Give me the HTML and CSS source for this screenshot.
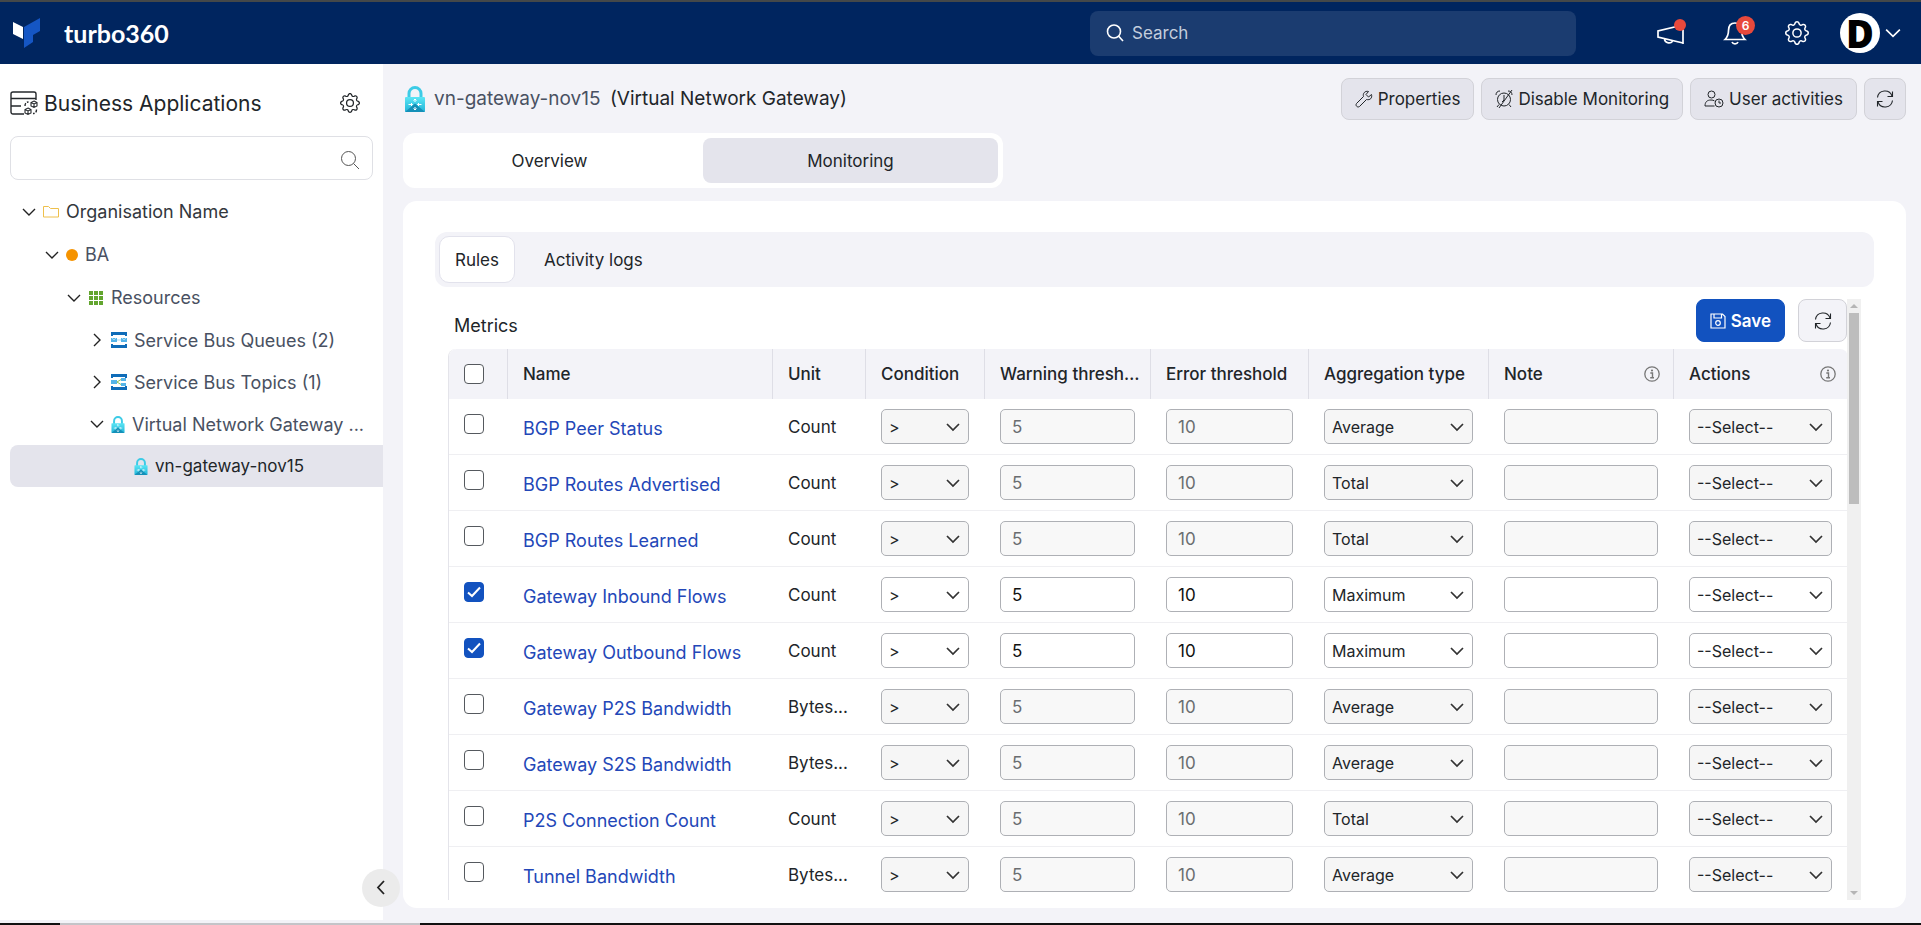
FILE: index.html
```html
<!DOCTYPE html>
<html lang="en">
<head>
<meta charset="utf-8">
<meta name="viewport" content="width=device-width, initial-scale=1">
<title>turbo360 - Monitoring</title>
<link rel="stylesheet" href="styles.css">
</head>
<body>
<svg class="defs" aria-hidden="true">
  <defs>
    <linearGradient id="cyan" x1="0" y1="0" x2="0" y2="1"><stop offset="0" stop-color="#5be6f5"/><stop offset="1" stop-color="#22b4d8"/></linearGradient>
    <symbol id="i-gear" viewBox="0 0 16 16"><path fill="currentColor" d="M8 4.754a3.246 3.246 0 1 0 0 6.492 3.246 3.246 0 0 0 0-6.492zM5.754 8a2.246 2.246 0 1 1 4.492 0 2.246 2.246 0 0 1-4.492 0z"/><path fill="currentColor" d="M9.796 1.343c-.527-1.79-3.065-1.79-3.592 0l-.094.319a.873.873 0 0 1-1.255.52l-.292-.16c-1.64-.892-3.433.902-2.54 2.541l.159.292a.873.873 0 0 1-.52 1.255l-.319.094c-1.79.527-1.79 3.065 0 3.592l.319.094a.873.873 0 0 1 .52 1.255l-.16.292c-.892 1.64.901 3.434 2.541 2.54l.292-.159a.873.873 0 0 1 1.255.52l.094.319c.527 1.79 3.065 1.79 3.592 0l.094-.319a.873.873 0 0 1 1.255-.52l.292.16c1.64.893 3.434-.902 2.54-2.541l-.159-.292a.873.873 0 0 1 .52-1.255l.319-.094c1.79-.527 1.79-3.065 0-3.592l-.319-.094a.873.873 0 0 1-.52-1.255l.16-.292c.893-1.64-.902-3.433-2.541-2.54l-.292.159a.873.873 0 0 1-1.255-.52l-.094-.319zm-2.633.283c.246-.835 1.428-.835 1.674 0l.094.319a1.873 1.873 0 0 0 2.693 1.115l.291-.16c.764-.415 1.6.42 1.184 1.185l-.159.292a1.873 1.873 0 0 0 1.116 2.692l.318.094c.835.246.835 1.428 0 1.674l-.319.094a1.873 1.873 0 0 0-1.115 2.693l.16.291c.415.764-.42 1.6-1.185 1.184l-.291-.159a1.873 1.873 0 0 0-2.693 1.116l-.094.318c-.246.835-1.428.835-1.674 0l-.094-.319a1.873 1.873 0 0 0-2.692-1.115l-.292.16c-.764.415-1.6-.42-1.184-1.185l.159-.291A1.873 1.873 0 0 0 1.945 8.93l-.319-.094c-.835-.246-.835-1.428 0-1.674l.319-.094A1.873 1.873 0 0 0 3.06 4.377l-.16-.292c-.415-.764.42-1.6 1.185-1.184l.292.159a1.873 1.873 0 0 0 2.692-1.115l.094-.319z"/></symbol>
    <symbol id="i-search" viewBox="0 0 20 20"><g fill="none" stroke="currentColor"><circle cx="8.5" cy="8.5" r="7"/><path d="M13.5 13.5 19 19"/></g></symbol>
    <symbol id="i-down" viewBox="0 0 14 14"><path d="M1 4l6 6 6-6" fill="none" stroke="currentColor" stroke-width="1.400"/></symbol>
    <symbol id="i-right" viewBox="0 0 14 14"><path d="M4 1l6 6-6 6" fill="none" stroke="currentColor" stroke-width="1.400"/></symbol>
    <symbol id="i-refresh" viewBox="0 0 18 18"><g fill="none" stroke="currentColor" stroke-width="1.100"><path d="M1.500 7.500A7.500 7.500 0 0 1 16 6M16.500 10.500A7.500 7.500 0 0 1 2 12"/><path d="M16.500 1.500V6.500h-5M1.500 16.500v-5h5"/></g></symbol>
    <symbol id="i-lock" viewBox="0 0 20 26"><path d="M4 13V7.500a6 6 0 0 1 12 0V13" fill="none" stroke="#3ccbe6" stroke-width="3"/><rect y="11" width="20" height="15" rx="1" fill="url(#cyan)"/><path d="M0 26 10 17.500 20 26z" fill="#1490b8"/><path d="M10 13v3M10 21v3M3.500 18.500h4M12.500 18.500h4M8.500 14.500 10 13l1.500 1.500M8.500 22.500 10 24l1.500-1.500M6 17l1.500 1.500L6 20M14 17l-1.500 1.500L14 20" fill="none" stroke="#fff"/></symbol>
    <symbol id="i-info" viewBox="0 0 16 16"><circle cx="8" cy="8" r="7.200" fill="none" stroke="currentColor" stroke-width="1.300"/><circle cx="8" cy="4.500" r="1.100" fill="currentColor"/><path d="M6.300 7h2.200v4.500M6.200 11.700h3.800" fill="none" stroke="currentColor" stroke-width="1.400"/></symbol>
  </defs>
</svg>

<div class="app">
  <header class="topbar">
    <a class="brand" href="#">
      <svg class="brand-mark" viewBox="0 0 28 30"><path d="M0 4l10 5v12L0 16z" fill="#fff"/><path d="M11 9 27 0v13l-7 4v7l-9 6z" fill="#1556c4"/></svg>
      <span>turbo360</span>
    </a>
    <label class="global-search">
      <svg class="s18" viewBox="0 0 18 18" fill="none" stroke="#fff" stroke-width="1.600"><circle cx="8" cy="7.500" r="6.500"/><path d="M12.500 12 17 17"/></svg>
      <input type="search" placeholder="Search" aria-label="Search">
    </label>
    <div class="top-actions">
      <button class="top-btn" aria-label="Announcements">
        <svg class="s28" viewBox="0 0 28 28" fill="none" stroke="#fff" stroke-width="1.700"><path d="M1 12v6l25 6V6zM26 4v21M7.500 19.500c0 5 7.500 6 8 2"/></svg>
        <span class="dot"></span>
      </button>
      <button class="top-btn" aria-label="Notifications">
        <svg class="s24" viewBox="0 0 24 24" fill="none" stroke="#fff" stroke-width="1.700"><path d="M12 2C7 2 5.500 6 5.500 9.500c0 5-1.500 7-3.500 9h20c-2-2-3.500-4-3.500-9C18.500 6 17 2 12 2zM9 21c1 2.500 5 2.500 6 0"/></svg>
        <span class="badge">6</span>
      </button>
      <button class="top-btn" aria-label="Settings"><svg class="s24"><use href="#i-gear"/></svg></button>
      <button class="account" aria-label="Account"><span class="avatar">D</span><svg class="s16"><use href="#i-down"/></svg></button>
    </div>
  </header>

  <div class="body">
    <aside class="sidebar">
      <div class="side-head">
        <svg class="s28" viewBox="0 0 28 28" fill="none" stroke="#25282c" stroke-width="1.400"><path d="M14 25H3a2 2 0 0 1-2-2V5a2 2 0 0 1 2-2h21a2 2 0 0 1 2 2v6M1 9.500h25M1 17h10"/><path d="M24 12l3 1.500v3.500l-3 1.500-3-1.500v-3.500zM21 13.500l3 1.500 3-1.500M24 15v3.500M18 19l3 1.500V24l-3 1.500L15 24v-3.500zM15 20.500l3 1.500 3-1.500M18 22v3.500" stroke-width="1.100"/><path d="M15 17c0-2.500 1-4 3.500-4M26.500 20.500c0 2.500-1 4-3.500 4" stroke-dasharray="3 1.500"/></svg>
        <h2>Business Applications</h2>
        <button class="plain" aria-label="Application settings"><svg class="s20"><use href="#i-gear"/></svg></button>
      </div>
      <label class="side-search">
        <input type="text" aria-label="Filter applications">
        <svg class="s20"><use href="#i-search"/></svg>
      </label>
      <ul class="tree">
        <li class="node l0"><svg class="chev"><use href="#i-down"/></svg><svg class="s16" viewBox="0 0 16 16"><path d="M.5 13V2.500h5l2 2h8V13z" fill="none" stroke="#eec04c"/></svg><span class="dark">Organisation Name</span></li>
        <li class="node l1"><svg class="chev"><use href="#i-down"/></svg><span class="status"></span><span>BA</span></li>
        <li class="node l2"><svg class="chev"><use href="#i-down"/></svg><svg class="s16" viewBox="0 0 16 16"><path d="M1 1h4v4H1zM6 1h4v4H6zM11 1h4v4h-4zM1 6h4v4H1zM6 6h4v4H6zM11 6h4v4h-4zM1 11h4v4H1zM6 11h4v4H6zM11 11h4v4h-4z" fill="#62a52e"/></svg><span>Resources</span></li>
        <li class="node l3"><svg class="chev"><use href="#i-right"/></svg><svg class="s16" viewBox="0 0 16 16"><path d="M0 0h16v4h-2V3H2v1H0zM0 16h16v-4h-2v1H2v-1H0z" fill="#0f6cb8"/><path d="M0 6h6v4H0zM10 6h6v4h-6z" fill="#55b4e8"/><path d="M6 8h4M1 6l2 2 2-2M11 6l2 2 2-2" fill="none" stroke="#a5dbf5"/></svg><span>Service Bus Queues (2)</span></li>
        <li class="node l3"><svg class="chev"><use href="#i-right"/></svg><svg class="s16" viewBox="0 0 16 16"><path d="M0 0h16v4h-2V3H2v1H0zM0 16h16v-4h-2v1H2v-1H0z" fill="#0f6cb8"/><path d="M0 6h6v4H0zM10 4h5v3h-5zM10 9h5v3h-5z" fill="#55b4e8"/><path d="M6 8l4-2.500M6 8l4 2.500" stroke="#8cc152" fill="none"/></svg><span>Service Bus Topics (1)</span></li>
        <li class="node l3"><svg class="chev"><use href="#i-down"/></svg><svg class="lock-s"><use href="#i-lock"/></svg><span>Virtual Network Gateway ...</span></li>
        <li class="node l4 selected"><svg class="lock-s"><use href="#i-lock"/></svg><span>vn-gateway-nov15</span></li>
      </ul>
      <button class="collapse" aria-label="Collapse sidebar"><svg class="s16" viewBox="0 0 16 16"><path d="M11 1 5 7.500 11 14" fill="none" stroke="#222" stroke-width="1.800"/></svg></button>
    </aside>

    <main class="main">
      <div class="page-head">
        <svg class="lock-l"><use href="#i-lock"/></svg>
        <h1><span>vn-gateway-nov15</span> (Virtual Network Gateway)</h1>
        <div class="page-actions">
          <button class="btn"><svg class="s18" viewBox="0 0 18 18" fill="none" stroke="currentColor"><path d="M16.500 4.500 13.500 7 11 4.500 13.500 1.500C10 .5 7.500 3.500 8.500 6.500L1.500 13.500c-1.500 2 1 4.500 3 3L11.500 9.500c3.500 1 6-1.500 5-5z"/></svg>Properties</button>
          <button class="btn"><svg class="s18" viewBox="0 0 18 18" fill="none" stroke="currentColor"><circle cx="9" cy="9.500" r="6.500"/><path d="M1 5C1 2.500 2.500 1 5 1M13 1c2.500 0 4 1.500 4 4M9 5v5l-2 2M17 0 4 18M4 14.500 2 17M14 14.500l2 2.500"/></svg>Disable Monitoring</button>
          <button class="btn"><svg class="s20" viewBox="0 0 20 20" fill="none" stroke="currentColor"><circle cx="7.500" cy="5.500" r="3.500"/><path d="M10.500 17H1c0-4 2-6 6-6 1.500 0 2.500.2 3.500 1"/><circle cx="15" cy="14" r="4"/><path d="M15 11.500V14h2"/></svg>User activities</button>
          <button class="btn icon" aria-label="Refresh"><svg class="s18"><use href="#i-refresh"/></svg></button>
        </div>
      </div>

      <nav class="tabs">
        <button>Overview</button>
        <button class="active">Monitoring</button>
      </nav>

      <section class="card">
        <nav class="subtabs">
          <button class="active">Rules</button>
          <button>Activity logs</button>
        </nav>
        <div class="scroller">
          <div class="content">
            <div class="metrics-head">
              <h3>Metrics</h3>
              <button class="btn save"><svg class="s16" viewBox="0 0 16 16" fill="none" stroke="currentColor" stroke-width="1.200"><path d="M1 1h11.500L15 3.500V15H1zM4 1v4h7.500V1"/><circle cx="8" cy="10" r="2.300"/></svg>Save</button>
              <button class="btn light" aria-label="Refresh metrics"><svg class="s18"><use href="#i-refresh"/></svg></button>
            </div>
            <table class="metrics">
              <colgroup><col class="c-check"><col class="c-name"><col class="c-unit"><col class="c-cond"><col class="c-warn"><col class="c-err"><col class="c-agg"><col class="c-note"><col class="c-act"></colgroup>
              <thead><tr>
                <th><input type="checkbox" aria-label="Select all"></th><th>Name</th><th>Unit</th><th>Condition</th><th>Warning threshold</th><th>Error threshold</th><th>Aggregation type</th>
                <th><div class="th-info">Note<svg class="s16"><use href="#i-info"/></svg></div></th>
                <th><div class="th-info">Actions<svg class="s16"><use href="#i-info"/></svg></div></th>
              </tr></thead>
              <tbody>
                <tr><td><input type="checkbox" aria-label="BGP Peer Status"></td><td><a href="#">BGP Peer Status</a></td><td>Count</td><td><select disabled aria-label="Condition"><option>&gt;</option></select></td><td><input type="text" value="5" disabled aria-label="Warning threshold"></td><td><input type="text" value="10" disabled aria-label="Error threshold"></td><td><select disabled aria-label="Aggregation type"><option>Average</option></select></td><td><input type="text" disabled aria-label="Note"></td><td><select disabled aria-label="Actions"><option>--Select--</option></select></td></tr>
                <tr><td><input type="checkbox" aria-label="BGP Routes Advertised"></td><td><a href="#">BGP Routes Advertised</a></td><td>Count</td><td><select disabled aria-label="Condition"><option>&gt;</option></select></td><td><input type="text" value="5" disabled aria-label="Warning threshold"></td><td><input type="text" value="10" disabled aria-label="Error threshold"></td><td><select disabled aria-label="Aggregation type"><option>Total</option></select></td><td><input type="text" disabled aria-label="Note"></td><td><select disabled aria-label="Actions"><option>--Select--</option></select></td></tr>
                <tr><td><input type="checkbox" aria-label="BGP Routes Learned"></td><td><a href="#">BGP Routes Learned</a></td><td>Count</td><td><select disabled aria-label="Condition"><option>&gt;</option></select></td><td><input type="text" value="5" disabled aria-label="Warning threshold"></td><td><input type="text" value="10" disabled aria-label="Error threshold"></td><td><select disabled aria-label="Aggregation type"><option>Total</option></select></td><td><input type="text" disabled aria-label="Note"></td><td><select disabled aria-label="Actions"><option>--Select--</option></select></td></tr>
                <tr><td><input type="checkbox" checked aria-label="Gateway Inbound Flows"></td><td><a href="#">Gateway Inbound Flows</a></td><td>Count</td><td><select aria-label="Condition"><option>&gt;</option></select></td><td><input type="text" value="5" aria-label="Warning threshold"></td><td><input type="text" value="10" aria-label="Error threshold"></td><td><select aria-label="Aggregation type"><option>Maximum</option></select></td><td><input type="text" aria-label="Note"></td><td><select aria-label="Actions"><option>--Select--</option></select></td></tr>
                <tr><td><input type="checkbox" checked aria-label="Gateway Outbound Flows"></td><td><a href="#">Gateway Outbound Flows</a></td><td>Count</td><td><select aria-label="Condition"><option>&gt;</option></select></td><td><input type="text" value="5" aria-label="Warning threshold"></td><td><input type="text" value="10" aria-label="Error threshold"></td><td><select aria-label="Aggregation type"><option>Maximum</option></select></td><td><input type="text" aria-label="Note"></td><td><select aria-label="Actions"><option>--Select--</option></select></td></tr>
                <tr><td><input type="checkbox" aria-label="Gateway P2S Bandwidth"></td><td><a href="#">Gateway P2S Bandwidth</a></td><td>Bytes...</td><td><select disabled aria-label="Condition"><option>&gt;</option></select></td><td><input type="text" value="5" disabled aria-label="Warning threshold"></td><td><input type="text" value="10" disabled aria-label="Error threshold"></td><td><select disabled aria-label="Aggregation type"><option>Average</option></select></td><td><input type="text" disabled aria-label="Note"></td><td><select disabled aria-label="Actions"><option>--Select--</option></select></td></tr>
                <tr><td><input type="checkbox" aria-label="Gateway S2S Bandwidth"></td><td><a href="#">Gateway S2S Bandwidth</a></td><td>Bytes...</td><td><select disabled aria-label="Condition"><option>&gt;</option></select></td><td><input type="text" value="5" disabled aria-label="Warning threshold"></td><td><input type="text" value="10" disabled aria-label="Error threshold"></td><td><select disabled aria-label="Aggregation type"><option>Average</option></select></td><td><input type="text" disabled aria-label="Note"></td><td><select disabled aria-label="Actions"><option>--Select--</option></select></td></tr>
                <tr><td><input type="checkbox" aria-label="P2S Connection Count"></td><td><a href="#">P2S Connection Count</a></td><td>Count</td><td><select disabled aria-label="Condition"><option>&gt;</option></select></td><td><input type="text" value="5" disabled aria-label="Warning threshold"></td><td><input type="text" value="10" disabled aria-label="Error threshold"></td><td><select disabled aria-label="Aggregation type"><option>Total</option></select></td><td><input type="text" disabled aria-label="Note"></td><td><select disabled aria-label="Actions"><option>--Select--</option></select></td></tr>
                <tr><td><input type="checkbox" aria-label="Tunnel Bandwidth"></td><td><a href="#">Tunnel Bandwidth</a></td><td>Bytes...</td><td><select disabled aria-label="Condition"><option>&gt;</option></select></td><td><input type="text" value="5" disabled aria-label="Warning threshold"></td><td><input type="text" value="10" disabled aria-label="Error threshold"></td><td><select disabled aria-label="Aggregation type"><option>Average</option></select></td><td><input type="text" disabled aria-label="Note"></td><td><select disabled aria-label="Actions"><option>--Select--</option></select></td></tr>
              </tbody>
            </table>
          </div>
          <div class="scrollbar"><span class="arrow up"></span><span class="thumb"></span><span class="arrow down"></span></div>
        </div>
      </section>
    </main>
  </div>
  <footer class="edge"><span class="edge-a"></span><span class="edge-b"></span><span class="edge-c"></span></footer>
</div>
</body>
</html>
```
FILE: styles.css
```css
*, *::before, *::after { box-sizing: border-box; }
body {
  margin: 0;
  font-family: Inter, "Open Sans", sans-serif;
  font-size: 17px;
  color: #212529;
  background: #f3f3f8;
}
button, input, select { font: inherit; color: inherit; margin: 0; }
button { border: 0; background: none; padding: 0; white-space: nowrap; }
h1, h2, h3 { margin: 0; font-weight: 400; }
a { text-decoration: none; }
svg { flex: none; display: block; }
.defs { position: absolute; width: 0; height: 0; }
.s16 { width: 16px; height: 16px; }
.s18 { width: 18px; height: 18px; }
.s20 { width: 20px; height: 20px; }
.s24 { width: 24px; height: 24px; }
.s28 { width: 28px; height: 28px; }

.app { height: 100vh; display: flex; flex-direction: column; }

/* Top bar */
.topbar {
  flex: none;
  height: 64px;
  display: flex;
  align-items: center;
  padding: 0 20px 0 13px;
  border-top: 2px solid #444849;
  background: #00255f;
  color: #fff;
}
.brand { display: flex; align-items: center; gap: 23px; color: #fff; font-family: Lato, sans-serif; font-size: 25px; line-height: 28px; font-weight: 700; }
.brand-mark { width: 28px; height: 30px; }
.global-search {
  display: flex;
  align-items: center;
  gap: 6px;
  width: 486px;
  height: 45px;
  margin-left: auto;
  padding: 0 16px;
  border-radius: 8px;
  background: #1b3c70;
}
.global-search input { flex: 1; min-width: 0; border: 0; background: none; outline: 0; }
.global-search input::placeholder { color: #c3cddd; opacity: 1; }
.top-actions { display: flex; align-items: center; justify-content: flex-end; width: 325px; }
.top-btn { position: relative; margin-right: 38px; }
.dot { position: absolute; top: 0; right: -1px; width: 12px; height: 12px; border-radius: 50%; background: #e8493c; }
.badge { position: absolute; top: -5px; right: -8px; width: 19px; height: 19px; border-radius: 50%; background: #e8493c; font-size: 12px; font-weight: 600; line-height: 19px; text-align: center; }
.account { display: flex; align-items: center; gap: 5px; margin-left: -7px; }
.avatar { width: 40px; height: 40px; border-radius: 50%; background: #fff; color: #000; font-family: "Noto Sans", sans-serif; font-weight: 900; font-size: 38px; line-height: 40px; text-align: center; }

.body { flex: 1; min-height: 0; display: flex; }

/* Sidebar */
.sidebar { position: relative; flex: none; width: 383px; padding: 20px 0 0 10px; background: #fff; }
.side-head { display: flex; align-items: center; gap: 6px; height: 38px; padding-right: 23px; }
.side-head h2 { flex: 1; font-size: 21px; }
.side-search { display: flex; align-items: center; height: 44px; margin: 14px 10px 0 0; padding: 3px 12px 0 0; border: 1px solid #dfe0e5; border-radius: 8px; color: #555; }
.side-search input { flex: 1; min-width: 0; border: 0; background: none; outline: 0; padding: 0 12px; }
.tree { list-style: none; margin: 10px 0 0; padding: 0; font-size: 18px; color: #495162; }
.node { display: flex; align-items: center; height: 43px; gap: 7px; border-radius: 8px 0 0 8px; }
.node span { overflow: hidden; white-space: nowrap; text-overflow: ellipsis; }
.node .dark { color: #33373d; }
.chev { width: 14px; height: 14px; color: #222; }
.status { flex: none; width: 12px; height: 12px; border-radius: 50%; background: #f59300; }
.lock-s { width: 14px; height: 17px; }
.l0 { padding-left: 12px; }
.l1 { padding-left: 35px; }
.l2 { padding-left: 57px; }
.l3 { padding-left: 80px; height: 42px; }
.l4 { padding-left: 124px; }
.selected { height: 42px; background: #e4e4ec; color: #212529; font-size: 17px; }
.collapse { position: absolute; right: -17px; bottom: 13px; width: 38px; height: 38px; border-radius: 50%; background: #ebebeb; display: grid; place-items: center; }

/* Main */
.main { flex: 1; min-width: 0; display: flex; flex-direction: column; padding: 14px 15px 12px 20px; }
.page-head { display: flex; align-items: center; gap: 9px; height: 42px; padding-left: 2px; }
.page-head h1 { flex: 1; font-size: 19px; line-height: 24px; }
.page-head h1 span { color: #495162; margin-right: 4px; }
.lock-l { width: 20px; height: 26px; }
.page-actions { display: flex; gap: 7px; }
.btn { display: flex; align-items: center; justify-content: center; gap: 5px; height: 42px; padding: 0 13px; border: 1px solid #d2d2d8; border-radius: 8px; background: #e4e4ec; }
.btn.icon { width: 42px; padding: 0; }
.tabs { display: flex; gap: 12px; width: 600px; height: 55px; margin-top: 13px; padding: 5px; border-radius: 12px; background: #fff; }
.tabs button { flex: 1; border-radius: 8px; }
.tabs .active { flex: 0 0 295px; background: #e4e4ec; }

.card { flex: 1; min-height: 0; display: flex; flex-direction: column; margin-top: 13px; padding: 31px 32px 8px; border-radius: 14px; background: #fff; }
.subtabs { flex: none; display: flex; gap: 13px; height: 55px; padding: 4px 4px; border-radius: 12px; background: #f3f3f8; }
.subtabs button { padding: 0 15px; border: 1px solid transparent; border-radius: 10px; }
.subtabs .active { background: #fff; border-color: #e2e2ec; }
.scroller { flex: 1; min-height: 0; display: flex; margin: 12px 13px 0 13px; overflow: hidden; }
.content { flex: 1; min-width: 0; }
.metrics-head { display: flex; align-items: center; height: 43px; margin-bottom: 7px; }
.metrics-head h3 { flex: 1; padding: 10px 0 0 6px; font-size: 18px; }
.btn.save { height: 43px; border-color: #1252bf; background: #1252bf; color: #fff; font-weight: 600; }
.btn.light { width: 49px; height: 43px; margin-left: 13px; background: #f3f3f8; }

/* Metrics table */
.metrics { width: 100%; table-layout: fixed; border-collapse: separate; border-spacing: 0; border-left: 1px solid #e4e4ea; border-radius: 8px 8px 0 0; }
.c-check { width: 59px; }
.c-name { width: 265px; }
.c-unit { width: 93px; }
.c-cond { width: 119px; }
.c-warn { width: 166px; }
.c-err { width: 158px; }
.c-agg { width: 180px; }
.c-note { width: 185px; }
.c-act { width: 174px; }
.metrics th { height: 50px; padding: 0 8px 0 15px; border-right: 1px solid #dedee6; background: #f3f3f8; font-weight: 500; text-align: left; overflow: hidden; white-space: nowrap; text-overflow: ellipsis; }
.metrics th:first-child { border-top-left-radius: 8px; }
.metrics th:nth-child(8) { padding-right: 13px; }
.metrics th:last-child { border-right: 0; border-top-right-radius: 8px; padding-right: 12px; }
.metrics td { height: 56px; padding: 0 16px 0 15px; border-bottom: 1px solid #efeff2; white-space: nowrap; }
.metrics td:first-child { padding-bottom: 6px; }
.metrics td:nth-child(2) { padding-top: 4px; font-size: 18px; }
.metrics tr:last-child td { border-bottom-color: transparent; }
.metrics a { color: #2347b8; }
.th-info { display: flex; align-items: center; justify-content: space-between; }
.th-info svg { color: #777; }
.metrics input[type="checkbox"] { appearance: none; display: block; width: 20px; height: 20px; border: 1px solid #55595e; border-radius: 4px; background: #fff; }
.metrics input[type="checkbox"]:checked { border-color: #1252bf; background: #1252bf url("data:image/svg+xml,%3Csvg xmlns='http://www.w3.org/2000/svg' viewBox='0 0 18 18'%3E%3Cpath d='M3 9.500 7 13 15 4.500' fill='none' stroke='white' stroke-width='2'/%3E%3C/svg%3E"); }
.metrics input[type="text"], .metrics select { appearance: none; display: block; width: 100%; height: 35px; border: 1px solid #aeb0b5; border-radius: 5px; background-color: #fff; opacity: 1; }
.metrics input[type="text"] { padding: 0 11px; color: #111; }
.metrics select { padding: 0 28px 0 7px; font-size: 16px; color: #212529; background-image: url("data:image/svg+xml,%3Csvg xmlns='http://www.w3.org/2000/svg' viewBox='0 0 14 14'%3E%3Cpath d='M1 4l6 6 6-6' fill='none' stroke='%23333' stroke-width='1.700'/%3E%3C/svg%3E"); background-repeat: no-repeat; background-position: right 8px center; background-size: 14px 14px; }
.metrics input[type="text"]:disabled { background-color: #f8f8f8; color: #6a6d70; }
.metrics select:disabled { background-color: #f6f6f6; }

.scrollbar { flex: none; display: flex; flex-direction: column; align-items: center; width: 14px; padding: 5px 0; background: #f0f0f0; }
.thumb { width: 10px; height: 191px; margin-top: 5px; background: #bdbdbd; }
.arrow { border: 4px solid transparent; }
.up { border-top: 0; border-bottom-color: #b5b5b5; }
.down { border-bottom: 0; border-top-color: #b5b5b5; margin-top: auto; }

.edge { flex: none; display: flex; height: 5px; padding-top: 3px; }
.edge-a { width: 60px; background: #111; }
.edge-b { width: 360px; background: #c4c4c8; }
.edge-c { flex: 1; background: #111; }
```
